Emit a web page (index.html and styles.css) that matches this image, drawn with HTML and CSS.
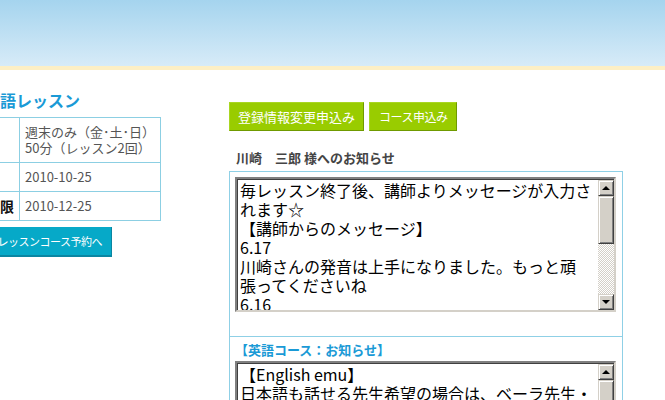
FILE: index.html
```html
<!DOCTYPE html>
<html lang="ja">

<head>
  <meta charset="UTF-8">
  <meta name="viewport" content="width=device-width, initial-scale=1.0">
  <title>マイページ</title>
  <link rel="stylesheet" href="styles.css">
</head>

<body>
  <div class="header"></div>

  <div class="page">
    <div class="side">
      <h2 class="side-title">現在の英語レッスン</h2>
      <table class="lesson-table">
        <tr>
          <th>コース</th>
          <td><span class="nowrap">週末のみ（金･土･日）</span><br><span class="nowrap">50分（レッスン2回）</span></td>
        </tr>
        <tr>
          <th>開始日</th>
          <td>2010-10-25</td>
        </tr>
        <tr>
          <th>受講有効期限</th>
          <td>2010-12-25</td>
        </tr>
      </table>
      <a class="btn-blue" href="#">レッスンコース予約へ</a>
    </div>

    <div class="main">
      <div class="btn-row">
        <a class="btn-green" href="#">登録情報変更申込み</a>
        <a class="btn-green btn-tight" href="#">コース申込み</a>
      </div>

      <h3 class="notice-title">川崎　三郎 様へのお知らせ</h3>

      <div class="notice-box">
        <div class="notice-section">
          <div class="msgbox">
            <div class="msgbox-text">毎レッスン終了後、講師よりメッセージが入力さ<br>れます☆<br>【講師からのメッセージ】<br>6.17<br>川崎さんの発音は上手になりました。もっと頑<br>張ってくださいね<br>6.16<br>今日はよく頑張りました。</div>
            <div class="scrollbar">
              <div class="sb-btn"><span class="arrow-up"></span></div>
              <div class="sb-thumb"></div>
              <div class="sb-track"></div>
              <div class="sb-btn"><span class="arrow-down"></span></div>
            </div>
          </div>
        </div>
        <div class="notice-section second">
          <div class="section-label">【英語コース：お知らせ】</div>
          <div class="msgbox">
            <div class="msgbox-text">【English emu】<br>日本語も話せる先生希望の場合は、ベーラ先生・<br>マリア先生がおすすめです。<br>ご予約はお早めにどうぞ。<br>【お休みのお知らせ】<br>12/29～1/3はお休みです。<br>よろしくお願いします。</div>
            <div class="scrollbar">
              <div class="sb-btn"><span class="arrow-up"></span></div>
              <div class="sb-thumb"></div>
              <div class="sb-track"></div>
              <div class="sb-btn"><span class="arrow-down"></span></div>
            </div>
          </div>
        </div>
      </div>
    </div>
  </div>
</body>

</html>
```

FILE: styles.css
```css
body {
  font-family: "Noto Sans CJK JP", "Liberation Sans", sans-serif;
  background-color: #fff;
  margin: 0;
  padding: 0;
  overflow-x: hidden;
}

.header {
  height: 66px;
  background: linear-gradient(#a5d4ee, #d7ebf8);
  border-bottom: 4px solid #fdefc5;
}

.page {
  display: flex;
  align-items: flex-start;
  gap: 71px;
}

/* left column, wider than what fits on screen */
.side {
  width: 234px;
  margin-left: -76px;
  padding-top: 19px;
}

.side-title {
  margin: 0 0 6px;
  padding-left: 12px;
  color: #1a9ad6;
  font-size: 16px;
  line-height: 22px;
  font-weight: bold;
}

.lesson-table {
  width: 100%;
  border-collapse: collapse;
  font-size: 13px;
  line-height: 16px;
}

.lesson-table th,
.lesson-table td {
  border: 1px solid #8ccfe3;
  padding: 6px 5px;
  text-align: left;
}

.lesson-table th {
  width: 85px;
  color: #111;
  font-size: 14px;
  font-weight: bold;
  white-space: nowrap;
}

.lesson-table td {
  color: #555;
}

.nowrap {
  white-space: nowrap;
}

.btn-blue {
  display: block;
  margin-top: 6px;
  width: 178px;
  height: 28px;
  line-height: 28px;
  padding-right: 9px;
  text-align: right;
  background-color: #06a9c8;
  border-right: 1px solid #0a86a2;
  border-bottom: 2px solid #0a86a2;
  color: #fff;
  font-size: 11px;
  letter-spacing: -0.5px;
  text-decoration: none;
  white-space: nowrap;
}

.main {
  width: 394px;
  padding-top: 32px;
}

.btn-row {
  display: flex;
  gap: 5px;
}

.btn-green {
  display: block;
  height: 27px;
  line-height: 27px;
  padding: 0 8px;
  background-color: #99cc00;
  border: 1px solid;
  border-color: #a9d622 #6f9a00 #6f9a00 #a9d622;
  color: #fff;
  font-size: 13px;
  text-decoration: none;
  white-space: nowrap;
}

.btn-tight {
  padding: 0 9px;
  font-size: 12px;
  letter-spacing: -0.5px;
}

.notice-title {
  margin: 18px 0 4px;
  padding-left: 7px;
  color: #444;
  font-size: 13px;
  line-height: 18px;
  font-weight: bold;
}

.notice-box {
  border: 1px solid #8fd0e6;
}

.notice-section {
  padding: 5px 5px 24px;
}

.notice-section.second {
  border-top: 1px solid #8fd0e6;
  padding-top: 4px;
}

.section-label {
  margin-bottom: 2px;
  color: #1a9ad6;
  font-size: 13px;
  line-height: 18px;
  font-weight: bold;
}

/* textarea look-alike with a classic scrollbar */
.msgbox {
  display: flex;
  width: 377px;
  height: 131px;
  border: 2px solid;
  border-color: #808080 #d4d0c8 #d4d0c8 #808080;
  box-shadow: inset 1px 1px 0 #404040;
  background-color: #fff;
}

.msgbox-text {
  flex: 1;
  overflow: hidden;
  padding: 2px 0 0 3px;
  color: #000;
  font-size: 16px;
  line-height: 19px;
  white-space: nowrap;
}

.scrollbar {
  display: flex;
  flex-direction: column;
  width: 16px;
  padding-top: 1px;
}

.sb-btn,
.sb-thumb {
  box-sizing: border-box;
  background-color: #d4d0c8;
  border: 1px solid;
  border-color: #d4d0c8 #404040 #404040 #d4d0c8;
  box-shadow: inset 1px 1px 0 #fff, inset -1px -1px 0 #808080;
}

.sb-btn {
  height: 16px;
  display: flex;
  align-items: center;
  justify-content: center;
}

.sb-thumb {
  height: 48px;
}

.sb-track {
  flex: 1;
  background: repeating-conic-gradient(#d4d0c8 0 25%, #fff 0 50%) 0 0 / 2px 2px;
}

.arrow-up,
.arrow-down {
  width: 0;
  height: 0;
  border-left: 4px solid transparent;
  border-right: 4px solid transparent;
}

.arrow-up {
  border-bottom: 4px solid #000;
}

.arrow-down {
  border-top: 4px solid #000;
}
```
